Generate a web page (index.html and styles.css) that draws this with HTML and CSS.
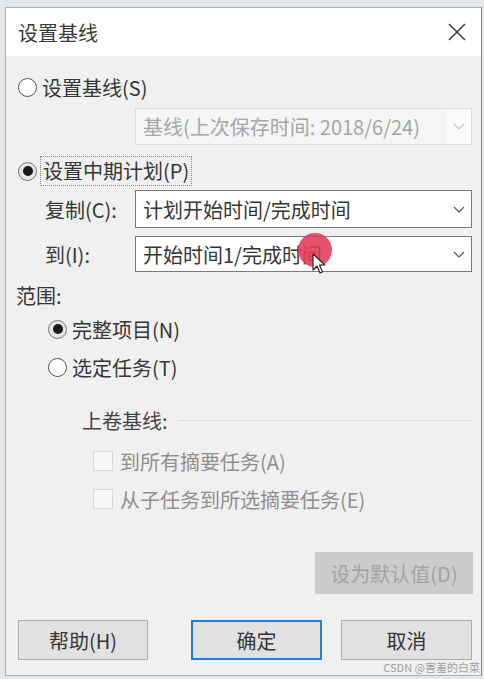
FILE: index.html
```html
<!DOCTYPE html>
<html>
<head>
<meta charset="utf-8">
<link rel="stylesheet" href="styles.css">
</head>
<body>

<div class="dialog">
  <div class="titlebar">
    <span class="title">设置基线</span>
    <svg class="close" width="18" height="18" viewBox="0 0 18 18">
      <path d="M1 1 L17 17 M17 1 L1 17" stroke="#3a3a3a" stroke-width="1.5" fill="none"/>
    </svg>
  </div>

  <div class="content">
    <div class="row radio-row first">
      <span class="radio"></span>
      <span class="label">设置基线(S)</span>
    </div>

    <div class="select disabled sel-baseline">
      <span class="select-text">基线(上次保存时间: 2018/6/24)</span>
      <span class="select-btn">
        <svg width="12" height="7" viewBox="0 0 12 7"><path d="M1 1 L6 6 L11 1" stroke="#c4c4c4" stroke-width="1.2" fill="none"/></svg>
      </span>
    </div>

    <div class="row radio-row interim">
      <span class="radio checked"></span>
      <span class="label focus">设置中期计划(P)</span>
    </div>

    <div class="field-row copy-row">
      <span class="field-label">复制(C):</span>
      <div class="select">
        <span class="select-text">计划开始时间/完成时间</span>
        <span class="select-btn">
          <svg width="12" height="7" viewBox="0 0 12 7"><path d="M1 1 L6 6 L11 1" stroke="#555" stroke-width="1.2" fill="none"/></svg>
        </span>
      </div>
    </div>

    <div class="field-row to-row">
      <span class="field-label">到(I):</span>
      <div class="select">
        <span class="select-text">开始时间1/完成时间</span>
        <span class="select-btn">
          <svg width="12" height="7" viewBox="0 0 12 7"><path d="M1 1 L6 6 L11 1" stroke="#555" stroke-width="1.2" fill="none"/></svg>
        </span>
      </div>
    </div>

    <div class="row scope-label">范围:</div>

    <div class="row radio-row scope full">
      <span class="radio checked"></span>
      <span class="label">完整项目(N)</span>
    </div>
    <div class="row radio-row scope selected">
      <span class="radio"></span>
      <span class="label">选定任务(T)</span>
    </div>

    <div class="row group-head">
      <span class="group-title">上卷基线:</span>
      <span class="group-line"></span>
    </div>

    <div class="row check-row all-summary">
      <span class="checkbox"></span>
      <span class="label muted">到所有摘要任务(A)</span>
    </div>
    <div class="row check-row sub-summary">
      <span class="checkbox"></span>
      <span class="label muted">从子任务到所选摘要任务(E)</span>
    </div>

    <div class="default-row">
      <button class="btn disabled-btn">设为默认值(D)</button>
    </div>

    <div class="button-row">
      <button class="btn help">帮助(H)</button>
      <button class="btn ok">确定</button>
      <button class="btn cancel">取消</button>
    </div>
  </div>
</div>

<!-- click highlight and pointer from the recording -->
<div class="click-mark"></div>
<svg class="pointer" width="14" height="22" viewBox="0 0 14 22">
  <path d="M1 1 L1 17 L5 13 L8 20 L10.5 19 L7.5 12 L13 12 Z" fill="#fff" stroke="#222" stroke-width="1.1" stroke-linejoin="round"/>
</svg>

<div class="watermark">CSDN @害羞的白菜</div>

</body>
</html>
```

FILE: styles.css
```css
body {
  margin: 0;
  width: 484px;
  height: 679px;
  overflow: hidden;
  background: #e6e7e9;
  font-family: "Noto Sans CJK SC", "Liberation Sans", sans-serif;
  font-size: 20px;
  color: #363636;
  position: relative;
}

.dialog {
  margin: 7px 0 0 5px;
  width: 477px;
  height: 669px;
  box-sizing: border-box;
  border: 1px solid #9fb1c4;
  border-right-color: #5a9ad6;
  background: #f0f0f0;
  display: flex;
  flex-direction: column;
}

.titlebar {
  height: 48px;
  background: #fff;
  display: flex;
  align-items: center;
  justify-content: space-between;
  padding: 0 15px 0 12px;
  flex-shrink: 0;
}

.title {
  font-size: 20px;
  color: #3a3a3a;
}

.content {
  padding: 0 8px 0 10px;
  display: flex;
  flex-direction: column;
}

.row {
  display: flex;
  align-items: center;
  height: 22px;
  white-space: nowrap;
}

.radio-row {
  padding-left: 2px;
}

.radio {
  width: 19px;
  height: 19px;
  border: 1px solid #555;
  border-radius: 50%;
  background: #fff;
  box-sizing: border-box;
  flex-shrink: 0;
  position: relative;
}

.radio.checked {
  border-color: #777;
  background: #e6e6e6;
}

.radio.checked::after {
  content: "";
  position: absolute;
  left: 3.5px;
  top: 3.5px;
  width: 10px;
  height: 10px;
  border-radius: 50%;
  background: #1a1a1a;
}

.radio-row .label {
  margin-left: 5px;
}

.first {
  margin-top: 20px;
}

.select {
  display: flex;
  align-items: center;
  height: 37px;
  width: 337px;
  box-sizing: border-box;
  border: 1px solid #7a7a7a;
  background: #fff;
}

.select-text {
  flex: 1;
  padding-left: 7px;
  white-space: nowrap;
}

.select-btn {
  width: 24px;
  display: flex;
  justify-content: center;
}

.sel-baseline {
  margin: 10px 0 0 119px;
  border-color: #dadada;
  background: #f5f5f5;
}

.sel-baseline .select-text {
  color: #a6a6a6;
}

.sel-baseline .select-btn {
  align-self: stretch;
  align-items: center;
  background: #fbfbfb;
}

.interim {
  margin-top: 10px;
  height: 32px;
}

.interim .label {
  margin-left: 3px;
}

.label.focus {
  border: 1px dotted #8a8a8a;
  padding: 1px 2px;
  line-height: 26px;
}

.field-row {
  display: flex;
  align-items: center;
}

.field-label {
  width: 119px;
  padding-left: 29px;
  box-sizing: border-box;
}

.copy-row {
  margin-top: 3px;
}

.copy-row .select {
  height: 38px;
}

.to-row {
  margin-top: 8px;
}

.to-row .select {
  height: 36px;
}

.scope-label {
  margin-top: 12px;
}

.scope {
  padding-left: 32px;
}

.full {
  margin-top: 12px;
}

.selected {
  margin-top: 16px;
}

.group-head {
  margin-top: 31px;
  padding-left: 66px;
}

.group-title {
  color: #444;
}

.group-line {
  flex: 1;
  height: 1px;
  margin-left: 10px;
  background: #dcdcdc;
}

.check-row {
  padding-left: 77px;
}

.checkbox {
  width: 20px;
  height: 20px;
  box-sizing: border-box;
  border: 1px solid #d6d6d6;
  background: #f7f7f7;
  flex-shrink: 0;
}

.check-row .label {
  margin-left: 7px;
}

.muted {
  color: #8f8f8f;
}

.all-summary {
  margin-top: 19px;
}

.sub-summary {
  margin-top: 16px;
}

.btn {
  font-family: inherit;
  font-size: 20px;
  color: #363636;
  background: #e1e1e1;
  border: 1px solid #adadad;
  height: 40px;
  padding: 0;
  cursor: pointer;
}

.default-row {
  display: flex;
  justify-content: flex-end;
  margin-top: 42px;
}

.disabled-btn {
  width: 158px;
  height: 42px;
  background: #cccccc;
  border-color: #cccccc;
  color: #a3a3a3;
}

.button-row {
  display: flex;
  margin-top: 26px;
  padding-left: 2px;
}

.help {
  width: 130px;
}

.ok {
  width: 131px;
  margin-left: 43px;
  border: 2px solid #1c7fd6;
}

.cancel {
  width: 131px;
  margin-left: 19px;
}

.click-mark {
  position: absolute;
  left: 298px;
  top: 233px;
  width: 34px;
  height: 34px;
  border-radius: 50%;
  background: rgba(226, 58, 88, 0.88);
}

.pointer {
  position: absolute;
  left: 312px;
  top: 253px;
}

.watermark {
  position: absolute;
  right: 4px;
  top: 659px;
  font-size: 11px;
  color: #a0a0a0;
}
```
